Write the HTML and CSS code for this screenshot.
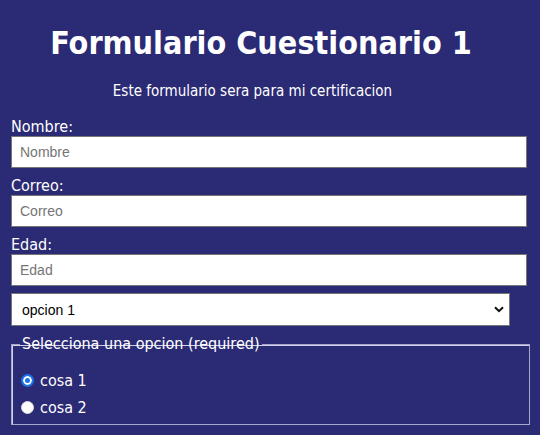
FILE: index.html
```html
<!DOCTYPE html>
<html lang="es">
<head>
<meta charset="utf-8">
<title>Formulario Cuestionario 1</title>
<link rel="stylesheet" href="styles.css">
</head>
<body>
<header class="head">
  <h1 class="title">Formulario Cuestionario 1</h1>
  <p class="subtitle">Este formulario sera para mi certificacion</p>
</header>
<form class="form">
  <label class="label" for="nombre">Nombre:</label>
  <input class="field" id="nombre" type="text" placeholder="Nombre">
  <label class="label" for="correo">Correo:</label>
  <input class="field" id="correo" type="email" placeholder="Correo">
  <label class="label" for="edad">Edad:</label>
  <input class="field" id="edad" type="number" placeholder="Edad">
  <div class="select-wrap">
    <select class="select">
      <option>opcion 1</option>
      <option>opcion 2</option>
    </select>
    <svg class="chev" width="10" height="7" viewBox="0 0 10 7"><path d="M1 1.2 L5 5.2 L9 1.2" fill="none" stroke="#111" stroke-width="2"/></svg>
  </div>
  <fieldset class="group">
    <legend class="legend">Selecciona una opcion (required)</legend>
    <label class="radio-row"><span class="radio on"></span>cosa 1</label>
    <label class="radio-row"><span class="radio"></span>cosa 2</label>
  </fieldset>
</form>
</body>
</html>
```
FILE: styles.css
```css
html, body { margin: 0; padding: 0; }
body {
  background: #2b2a74;
  color: #ffffff;
  font-family: "DejaVu Sans Condensed", "DejaVu Sans", sans-serif;
  width: 540px;
  height: 435px;
  overflow: hidden;
}
.head { text-align: center; padding-top: 24px; }
.title {
  margin: 0 0 0 -18px;
  font-size: 32px;
  font-weight: bold;
  line-height: 38px;
}
.subtitle {
  margin: 19px 0 0 -35px;
  font-size: 15px;
  line-height: 20px;
}
.form { padding: 17px 0 0 11px; display: flex; flex-direction: column; align-items: flex-start; }
.label { font-size: 16px; line-height: 18px; display: block; }
.field {
  box-sizing: border-box;
  width: 516px;
  height: 32px;
  margin: 0 0 9px 0;
  border: 1px solid #767676;
  border-radius: 0;
  background: #fff;
  padding: 0 8px;
  font-family: "Liberation Sans", Arial, sans-serif;
  font-size: 14px;
  color: #000;
  outline: none;
}
.field::placeholder { color: #757575; }
.select-wrap { position: relative; margin-top: -2px; }
.select {
  box-sizing: border-box;
  width: 499px;
  height: 33px;
  border: 1px solid #767676;
  border-radius: 0;
  background: #fff;
  padding: 0 0 0 10px;
  font-family: "Liberation Sans", Arial, sans-serif;
  font-size: 14px;
  color: #000;
  appearance: none;
  -webkit-appearance: none;
  display: block;
}
.chev { position: absolute; right: 6px; top: 13px; }
.group {
  box-sizing: border-box;
  width: 519px;
  margin: 9px 0 0 0;
  padding: 14px 8px 3px 9px;
  border: 1px solid #a8a8cc;
  box-shadow: inset 1px 1px 0 #d0d0e8;
}
.legend { font-size: 16px; padding: 0 2px; margin-left: -1px; line-height: 18px; }
.radio-row { display: flex; align-items: center; font-size: 16px; line-height: 27px; }
.radio {
  box-sizing: border-box;
  width: 13px; height: 13px;
  border-radius: 50%;
  background: #fff;
  margin-right: 6px;
  border: 1px solid #ddd;
}
.radio.on { border: 2px solid #1a73e8; box-shadow: inset 0 0 0 2px #fff; background: #1a73e8; }
```
